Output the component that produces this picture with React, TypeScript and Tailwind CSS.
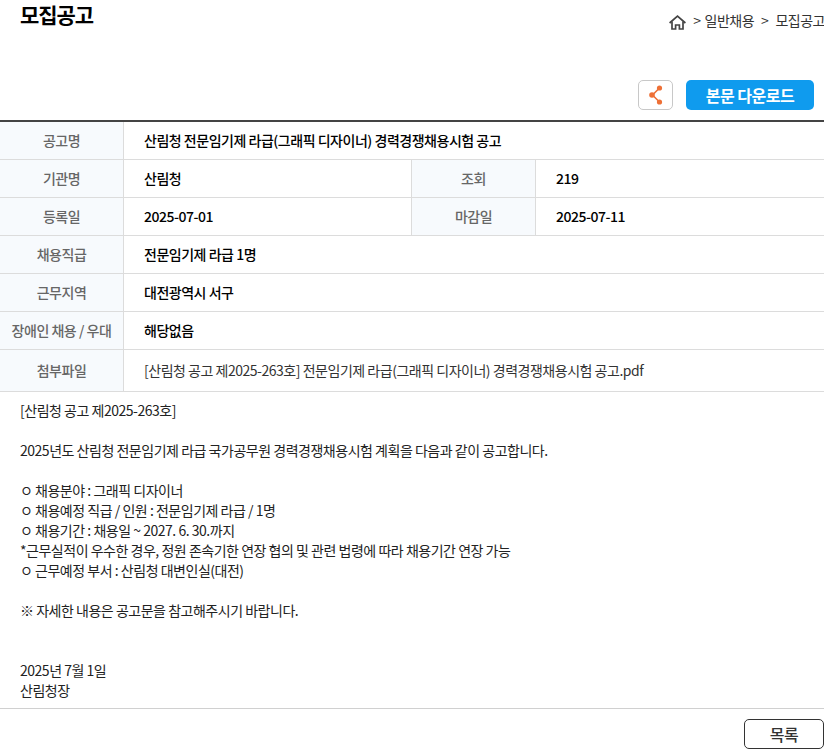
const bodyLines = [
  "[산림청 공고 제2025-263호]",
  "",
  "2025년도 산림청 전문임기제 라급 국가공무원 경력경쟁채용시험 계획을 다음과 같이 공고합니다.",
  "",
  "ㅇ 채용분야 : 그래픽 디자이너",
  "ㅇ 채용예정 직급 / 인원 : 전문임기제 라급 / 1명",
  "ㅇ 채용기간 : 채용일 ~ 2027. 6. 30.까지",
  "*근무실적이 우수한 경우, 정원 존속기한 연장 협의 및 관련 법령에 따라 채용기간 연장 가능",
  "ㅇ 근무예정 부서 : 산림청 대변인실(대전)",
  "",
  "※ 자세한 내용은 공고문을 참고해주시기 바랍니다.",
  "",
  "",
  "2025년 7월 1일",
  "산림청장",
];

function Label({ children }: { children: string }) {
  return (
    <div className="flex w-[124px] shrink-0 items-center justify-center border-r border-[#dcdcdc] bg-[#f7fafd] text-[14px] font-medium text-[#666]">
      {children}
    </div>
  );
}

function Row({ label, value }: { label: string; value: string }) {
  return (
    <div className="flex h-[38px] border-b border-[#dcdcdc]">
      <Label>{label}</Label>
      <div className="flex flex-1 items-center pl-5 text-[14px] font-medium text-black">{value}</div>
    </div>
  );
}

function DoubleRow({ a, b, c, d }: { a: string; b: string; c: string; d: string }) {
  return (
    <div className="flex h-[38px] border-b border-[#dcdcdc]">
      <Label>{a}</Label>
      <div className="flex w-[288px] shrink-0 items-center border-r border-[#dcdcdc] pl-5 text-[14px] font-medium text-black">{b}</div>
      <Label>{c}</Label>
      <div className="flex flex-1 items-center pl-5 text-[14px] font-medium text-black">{d}</div>
    </div>
  );
}

export default function App() {
  return (
    <div className="h-[749px] w-[824px] overflow-hidden bg-white font-['Noto_Sans_CJK_KR','Noto_Sans',sans-serif] tracking-[-0.03em] text-[#222]">
      {/* Title and breadcrumb */}
      <div className="flex h-[80px] items-start justify-between">
        <h1 className="pl-5 text-[21px] font-bold leading-[28px] tracking-[-0.05em] text-black">모집공고</h1>
        <div className="-mr-px flex items-center whitespace-nowrap pt-[10px] text-[14px] leading-[20px] text-[#333]">
          <svg className="mr-[7px] mt-[5px]" width="17" height="15" viewBox="0 0 17 15" fill="none" stroke="#444" strokeWidth="1.7">
            <path d="M.6 8 8.5 1.2 16.4 8" />
            <path d="M3 6.5V14h3.6v-4h3.8v4H14V6.5" />
          </svg>
          <span>&gt;</span>
          <span className="ml-[4px]">일반채용</span>
          <span className="mx-[7px]">&gt;</span>
          <span>모집공고</span>
        </div>
      </div>

      {/* Actions */}
      <div className="flex h-[40px] items-start justify-end gap-[13px] pr-[10px]">
        <button className="flex h-[30px] w-[35px] items-center justify-center rounded-[5px] border border-[#c8c8c8] bg-white">
          <svg width="16" height="22" viewBox="0 0 16 22" fill="none">
            <path d="M11.5 4 4.5 11l7 7" stroke="#ee7036" strokeWidth="1.6" />
            <circle cx="11.5" cy="4" r="2.6" fill="#ee7036" />
            <circle cx="4" cy="11" r="2.8" fill="#ee7036" />
            <circle cx="11.5" cy="18" r="2.6" fill="#ee7036" />
          </svg>
        </button>
        <button className="h-[30px] w-[128px] rounded-[5px] bg-[#0f9bee] text-[16px] font-bold text-white">본문 다운로드</button>
      </div>

      {/* Info table */}
      <div className="border-t-2 border-[#444]">
        <Row label="공고명" value="산림청 전문임기제 라급(그래픽 디자이너) 경력경쟁채용시험 공고" />
        <DoubleRow a="기관명" b="산림청" c="조회" d="219" />
        <DoubleRow a="등록일" b="2025-07-01" c="마감일" d="2025-07-11" />
        <Row label="채용직급" value="전문임기제 라급 1명" />
        <Row label="근무지역" value="대전광역시 서구" />
        <Row label="장애인 채용 / 우대" value="해당없음" />
        <div className="flex h-[42px] border-b border-[#dcdcdc]">
          <Label>첨부파일</Label>
          <div className="flex flex-1 items-center pl-5 text-[14px] text-[#333]">
            [산림청 공고 제2025-263호] 전문임기제 라급(그래픽 디자이너) 경력경쟁채용시험 공고.pdf
          </div>
        </div>
      </div>

      {/* Body */}
      <div className="h-[317px] border-b border-[#d0d0d0] px-5 pt-[8px] text-[14px] leading-[20px] text-[#222]">
        {bodyLines.map((line, i) => (
          <div key={i} className="h-[20px] whitespace-nowrap">{line}</div>
        ))}
      </div>

      <div className="flex justify-end pt-[10px]">
        <button className="h-[30px] w-[80px] rounded-[5px] border border-[#333] bg-white text-[16px] font-medium text-[#333]">목록</button>
      </div>
    </div>
  );
}
